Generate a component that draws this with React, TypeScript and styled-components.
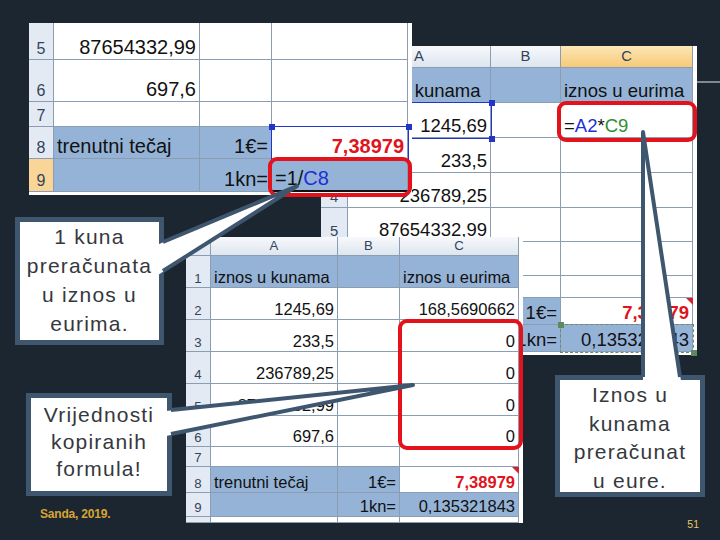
import React from "react";
import styled, { createGlobalStyle } from "styled-components";

const Global = createGlobalStyle`
  html, body { margin: 0; padding: 0; background: #1c2630; }
  #root { width: 720px; height: 540px; }
`;

const GRID = "#8b9db3";
const EDGE = "#3f566f";

type Kind = "plain" | "fill" | "col" | "colSel" | "row" | "rowSel" | "corner";
type Align = "l" | "r" | "c";
interface CellSpec {
  t?: React.ReactNode;
  k?: Kind;
  a?: Align;
  red?: boolean;
  edit?: boolean;
}

const bgOf: Record<Kind, string> = {
  plain: "#ffffff",
  fill: "#95b3d7",
  col: "linear-gradient(#f7f9fc, #dde5ef)",
  colSel: "linear-gradient(#fce7b6, #f6c976)",
  row: "#e3eaf4",
  rowSel: "#f9d597",
  corner: "#e3eaf4",
};
const isHead = (k: Kind) => k !== "plain" && k !== "fill";

/* ---------- slide canvas ---------- */

const Slide = styled.div`
  position: relative;
  width: 720px;
  height: 540px;
  overflow: hidden;
  background: #1c2630;
  font-family: "Liberation Sans", Arial, sans-serif;
`;

type Pos = { $x: number; $y: number; $w: number; $h: number };

/* a screenshot pasted on the slide: its place on the canvas is the content */
const SheetFrame = styled.div<Pos & { $cols: string; $rows: string; $fs: number; $z: number }>`
  position: absolute;
  left: ${(p) => p.$x}px;
  top: ${(p) => p.$y}px;
  width: ${(p) => p.$w}px;
  height: ${(p) => p.$h}px;
  z-index: ${(p) => p.$z};
  display: grid;
  grid-template-columns: ${(p) => p.$cols};
  grid-template-rows: ${(p) => p.$rows};
  align-content: start;
  justify-content: start;
  background: #fff;
  font-family: "Liberation Sans", Arial, sans-serif;
  font-size: ${(p) => p.$fs}px;
  color: #111;
`;

const Cell = styled.div<{ $k: Kind; $a: Align; $red?: boolean; $edit?: boolean; $r: number; $c: number }>`
  grid-row: ${(p) => p.$r};
  grid-column: ${(p) => p.$c};
  box-sizing: border-box;
  min-width: 0;
  display: flex;
  align-items: ${(p) => (p.$k === "col" || p.$k === "colSel" ? "center" : "flex-end")};
  justify-content: ${(p) => (p.$a === "l" ? "flex-start" : p.$a === "r" ? "flex-end" : "center")};
  padding: ${(p) => (p.$k === "col" || p.$k === "colSel" ? "0 3px" : "0 3px 2px")};
  background: ${(p) => bgOf[p.$k]};
  border-right: 1px solid ${GRID};
  border-bottom: ${(p) => (p.$edit ? "2px solid #111" : `1px solid ${GRID}`)};
  font-size: ${(p) => (isHead(p.$k) ? "0.8em" : "1em")};
  color: ${(p) => (p.$red ? "#e0141c" : isHead(p.$k) ? "#33435a" : "#111")};
  font-weight: ${(p) => (p.$red ? 700 : 400)};
  line-height: 1;
  white-space: nowrap;
  overflow: hidden;
`;

const RefBlue = styled.span`
  color: #1d2fd6;
`;
const RefGreen = styled.span`
  color: #2f8f2f;
`;

/* marks drawn over cells, placed on the same grid tracks as the cells */
const Mark = styled.div<{ $r: string; $c: string; $m: string }>`
  grid-row: ${(p) => p.$r};
  grid-column: ${(p) => p.$c};
  margin: ${(p) => p.$m};
  position: relative;
  z-index: 2;
  box-sizing: border-box;
  pointer-events: none;
`;

const RedFrame = styled(Mark)`
  border: 4px solid #e3121b;
  border-radius: 9px;
`;

const SelFrame = styled(Mark)<{ $color: string; $dashed?: boolean }>`
  border: 1.5px ${(p) => (p.$dashed ? "dashed" : "solid")} ${(p) => p.$color};
`;

const Handle = styled.span<{ $v: "top" | "bottom"; $hz: "left" | "right"; $color: string }>`
  position: absolute;
  width: 6px;
  height: 6px;
  background: ${(p) => p.$color};
  ${(p) => p.$v}: -3.5px;
  ${(p) => p.$hz}: -3.5px;
`;

const Comment = styled(Mark)`
  justify-self: end;
  align-self: start;
  width: 0;
  height: 0;
  border-top: 7px solid #d3222a;
  border-left: 7px solid transparent;
`;

/* ---------- callouts ---------- */

const Callout = styled.div<Pos & { $lh: number; $pad: string }>`
  position: absolute;
  left: ${(p) => p.$x}px;
  top: ${(p) => p.$y}px;
  width: ${(p) => p.$w}px;
  height: ${(p) => p.$h}px;
  z-index: 10;
  box-sizing: border-box;
  border: 5px solid ${EDGE};
  background: #fff;
  display: flex;
  flex-direction: column;
  align-items: center;
  justify-content: center;
  padding: ${(p) => p.$pad};
  text-align: center;
  font-size: 21px;
  line-height: ${(p) => p.$lh}px;
  letter-spacing: 1.2px;
  color: #35383d;
`;

const Line = styled.span`
  display: block;
  white-space: nowrap;
`;

const Pointers = styled.svg`
  position: absolute;
  left: 0;
  top: 0;
  width: 720px;
  height: 540px;
  z-index: 20;
  pointer-events: none;
`;

const TitleRule = styled.div`
  position: absolute;
  left: 697px;
  right: 0;
  top: 81px;
  height: 2px;
  background: #7d8894;
`;

const Footer = styled.div`
  position: absolute;
  left: 0;
  right: 0;
  bottom: 0;
  height: 40px;
  box-sizing: border-box;
  display: flex;
  justify-content: space-between;
  align-items: flex-end;
  padding: 0 21px 11px 40px;
  z-index: 30;
`;

const Author = styled.span`
  font-family: "Liberation Sans", Arial, sans-serif;
  font-weight: 700;
  font-size: 12px;
  line-height: 1;
  color: #d6a436;
  margin-bottom: 9px;
  letter-spacing: -0.2px;
`;

const PageNo = styled.span`
  font-family: "Liberation Sans", Arial, sans-serif;
  font-size: 10.5px;
  line-height: 1;
  color: #e6c769;
`;

/* ---------- sheet builder ---------- */

interface SheetProps {
  x: number;
  y: number;
  w: number;
  h: number;
  cols: string;
  rows: string;
  fs: number;
  z: number;
  data: CellSpec[][];
  children?: React.ReactNode;
}

const Sheet: React.FC<SheetProps> = ({ x, y, w, h, cols, rows, fs, z, data, children }) => (
  <SheetFrame $x={x} $y={y} $w={w} $h={h} $cols={cols} $rows={rows} $fs={fs} $z={z}>
    {data.map((row, ri) =>
      row.map((c, ci) => {
        const k = c.k ?? "plain";
        const a: Align = c.a ?? (isHead(k) ? "c" : "l");
        return (
          <Cell key={`${ri}-${ci}`} $r={ri + 1} $c={ci + 1} $k={k} $a={a} $red={c.red} $edit={c.edit}>
            {c.t}
          </Cell>
        );
      })
    )}
    {children}
  </SheetFrame>
);

const rh = (t: string, sel = false): CellSpec => ({ t, k: sel ? "rowSel" : "row" });
const E: CellSpec = {};

const sheet1: CellSpec[][] = [
  [rh("5"), { t: "87654332,99", a: "r" }, E, E],
  [rh("6"), { t: "697,6", a: "r" }, E, E],
  [rh("7"), E, E, E],
  [rh("8"), { t: "trenutni tečaj", k: "fill" }, { t: "1€=", k: "fill", a: "r" }, { t: "7,38979", a: "r", red: true }],
  [
    rh("9", true),
    { k: "fill" },
    { t: "1kn=", k: "fill", a: "r" },
    {
      t: (
        <>
          =1/<RefBlue>C8</RefBlue>
        </>
      ),
      k: "fill",
      edit: true,
    },
  ],
];

const sheet2: CellSpec[][] = [
  [{ k: "corner" }, { t: "A", k: "col" }, { t: "B", k: "col" }, { t: "C", k: "colSel" }],
  [rh("1"), { t: "iznos u kunama", k: "fill" }, { k: "fill" }, { t: "iznos u eurima", k: "fill" }],
  [
    rh("2"),
    { t: "1245,69", a: "r" },
    E,
    {
      t: (
        <>
          =<RefBlue>A2</RefBlue>*<RefGreen>C9</RefGreen>
        </>
      ),
    },
  ],
  [rh("3"), { t: "233,5", a: "r" }, E, E],
  [rh("4"), { t: "236789,25", a: "r" }, E, E],
  [rh("5"), { t: "87654332,99", a: "r" }, E, E],
  [rh("6"), { t: "697,6", a: "r" }, E, E],
  [rh("7"), E, E, E],
  [rh("8"), { t: "trenutni tečaj", k: "fill" }, { t: "1€=", k: "fill", a: "r" }, { t: "7,38979", a: "r", red: true }],
  [rh("9"), { k: "fill" }, { t: "1kn=", k: "fill", a: "r" }, { t: "0,135321843", k: "fill", a: "r" }],
];

const sheet3: CellSpec[][] = [
  [{ k: "corner" }, { t: "A", k: "col" }, { t: "B", k: "col" }, { t: "C", k: "col" }],
  [rh("1"), { t: "iznos u kunama", k: "fill" }, { k: "fill" }, { t: "iznos u eurima", k: "fill" }],
  [rh("2"), { t: "1245,69", a: "r" }, E, { t: "168,5690662", a: "r" }],
  [rh("3"), { t: "233,5", a: "r" }, E, { t: "0", a: "r" }],
  [rh("4"), { t: "236789,25", a: "r" }, E, { t: "0", a: "r" }],
  [rh("5"), { t: "87654332,99", a: "r" }, E, { t: "0", a: "r" }],
  [rh("6"), { t: "697,6", a: "r" }, E, { t: "0", a: "r" }],
  [rh("7"), E, E, E],
  [rh("8"), { t: "trenutni tečaj", k: "fill" }, { t: "1€=", k: "fill", a: "r" }, { t: "7,38979", a: "r", red: true }],
  [rh("9"), { k: "fill" }, { t: "1kn=", k: "fill", a: "r" }, { t: "0,135321843", k: "fill", a: "r" }],
  [rh(""), E, E, E],
];

const BLUE = "#2334c8";
const GREEN = "#5d8a5d";

export default function App() {
  return (
    <>
      <Global />
      <Slide>
        <TitleRule />

        {/* back sheet */}
        <Sheet
          x={321}
          y={46}
          w={376}
          h={309}
          cols="27px 143px 70px 132px"
          rows="22px 35px 35px 35px 35px 34px 34px 22px 27px 27px"
          fs={18.5}
          z={1}
          data={sheet2}
        >
          <SelFrame $r="3" $c="2" $m="-1px -1px -1px -1px" $color={BLUE}>
            <Handle $v="top" $hz="right" $color={BLUE} />
            <Handle $v="bottom" $hz="right" $color={BLUE} />
          </SelFrame>
          <RedFrame $r="3" $c="4" $m="-2px -4px -4px -4px" />
          <Comment $r="9" $c="4" $m="0" />
          <SelFrame $r="10" $c="4" $m="-1px" $color="#6f8a6f" $dashed>
            <Handle $v="top" $hz="left" $color={GREEN} />
            <Handle $v="bottom" $hz="right" $color={GREEN} />
          </SelFrame>
        </Sheet>

        {/* top-left sheet */}
        <Sheet
          x={29}
          y={23}
          w={383}
          h={172}
          cols="25px 146px 72px 136px"
          rows="37px 42px 25px 32px 33px"
          fs={20}
          z={3}
          data={sheet1}
        >
          <SelFrame $r="4" $c="4" $m="-1px" $color={BLUE}>
            <Handle $v="top" $hz="left" $color={BLUE} />
            <Handle $v="top" $hz="right" $color={BLUE} />
          </SelFrame>
          <RedFrame $r="5" $c="4" $m="-2px -4px -5px -4px" />
        </Sheet>

        {/* front sheet */}
        <Sheet
          x={186}
          y={237}
          w={337}
          h={286}
          cols="25px 127px 62px 119px"
          rows="19px 32px 32px 32px 32px 32px 31px 20px 26px 24px 6px"
          fs={16.5}
          z={5}
          data={sheet3}
        >
          <Comment $r="9" $c="4" $m="0" />
          <RedFrame $r="4 / 8" $c="4" $m="-1px -4px -3px -2px" />
        </Sheet>

        {/* callouts */}
        <Callout $x={15} $y={217} $w={149} $h={128} $lh={29} $pad="0 0 2px">
          <Line>1 kuna</Line>
          <Line>preračunata</Line>
          <Line>u iznos u</Line>
          <Line>eurima.</Line>
        </Callout>
        <Callout $x={26} $y={393} $w={146} $h={103} $lh={27} $pad="0 0 6px">
          <Line>Vrijednosti</Line>
          <Line>kopiranih</Line>
          <Line>formula!</Line>
        </Callout>
        <Callout $x={555} $y={375} $w={150} $h={122} $lh={28.5} $pad="4px 0 0">
          <Line>Iznos u</Line>
          <Line>kunama</Line>
          <Line>preračunat</Line>
          <Line>u eure.</Line>
        </Callout>

        <Pointers viewBox="0 0 720 540">
          <polygon points="297,186 158,244.5 158,275" fill="#fff" />
          <polyline
            points="163,242 297,186 163,271"
            fill="none"
            stroke={EDGE}
            strokeWidth={4}
            strokeLinejoin="round"
          />
          <polygon points="413,385 166,411 166,436" fill="#fff" />
          <polyline
            points="171,410 413,385 171,434"
            fill="none"
            stroke={EDGE}
            strokeWidth={4}
            strokeLinejoin="round"
          />
          <polygon points="643,132 681,381 643,381" fill="#fff" />
          <polyline
            points="643,377 643,132 680,377"
            fill="none"
            stroke={EDGE}
            strokeWidth={4}
            strokeLinejoin="round"
          />
        </Pointers>

        <Footer>
          <Author>Sanda, 2019.</Author>
          <PageNo>51</PageNo>
        </Footer>
      </Slide>
    </>
  );
}
